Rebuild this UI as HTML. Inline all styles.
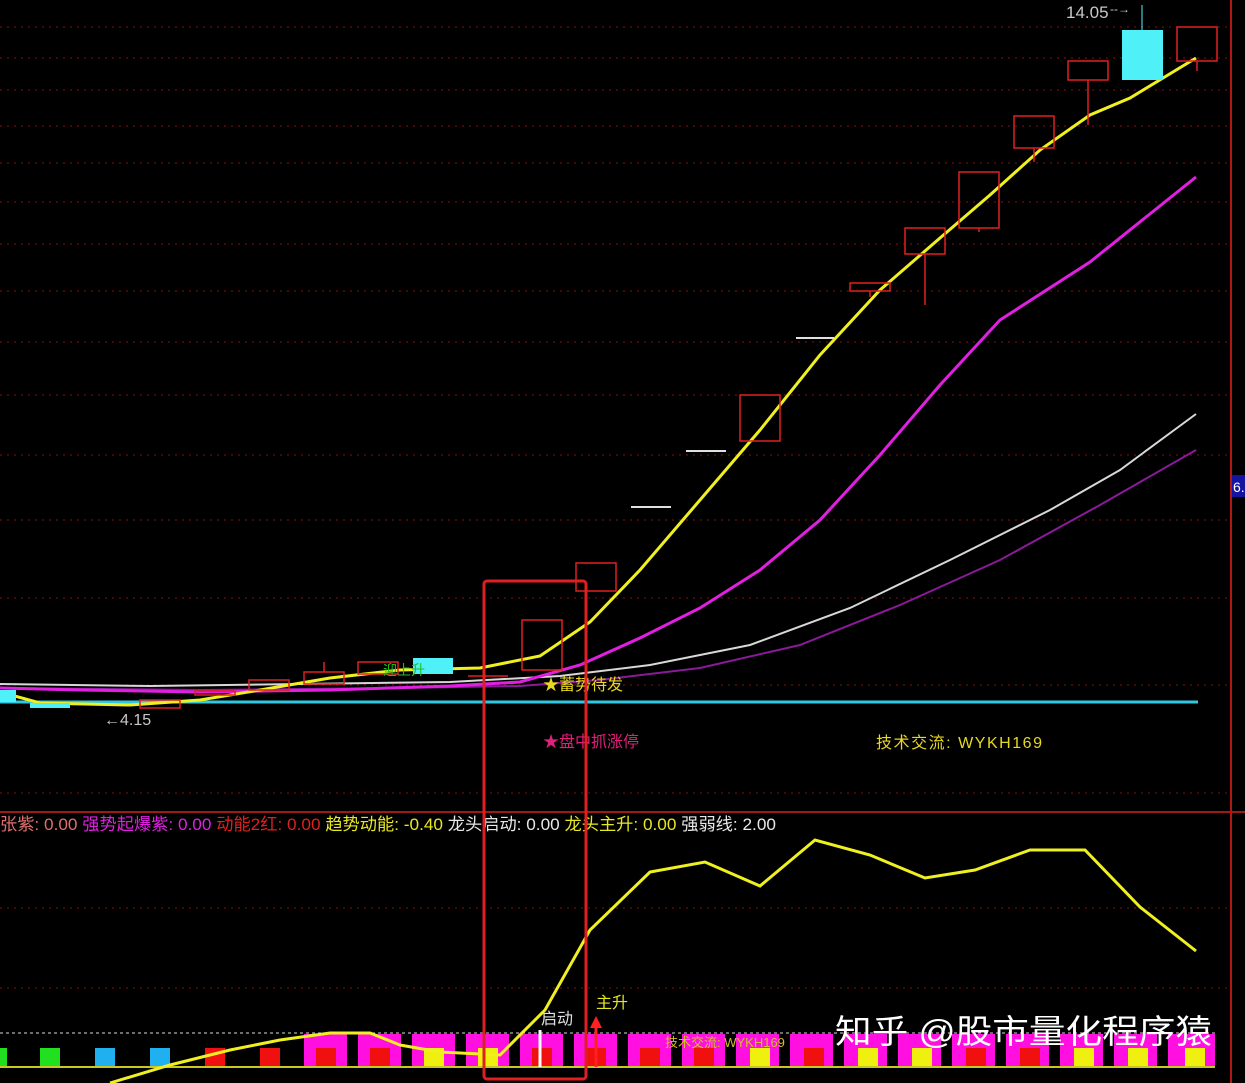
<!DOCTYPE html>
<html><head><meta charset="utf-8"><style>
html,body{margin:0;padding:0;background:#000;width:1245px;height:1083px;overflow:hidden}
svg{display:block}
text{font-family:"Liberation Sans","Noto Sans CJK SC",sans-serif}
</style></head><body>
<svg width="1245" height="1083" viewBox="0 0 1245 1083">
<g stroke="#8a1010" stroke-width="1" stroke-dasharray="2,5">
<line x1="0" y1="27" x2="1228" y2="27"/><line x1="0" y1="58" x2="1228" y2="58"/><line x1="0" y1="90" x2="1228" y2="90"/><line x1="0" y1="126" x2="1228" y2="126"/><line x1="0" y1="163" x2="1228" y2="163"/><line x1="0" y1="202" x2="1228" y2="202"/><line x1="0" y1="244" x2="1228" y2="244"/><line x1="0" y1="291" x2="1228" y2="291"/><line x1="0" y1="342" x2="1228" y2="342"/><line x1="0" y1="395" x2="1228" y2="395"/><line x1="0" y1="455" x2="1228" y2="455"/><line x1="0" y1="520" x2="1228" y2="520"/><line x1="0" y1="598" x2="1228" y2="598"/><line x1="0" y1="685" x2="1228" y2="685"/><line x1="0" y1="793" x2="1228" y2="793"/>
<line x1="0" y1="908" x2="1228" y2="908"/><line x1="0" y1="988" x2="1228" y2="988"/>
</g>
<line x1="0" y1="812" x2="1245" y2="812" stroke="#a01818" stroke-width="2"/>
<line x1="1231" y1="0" x2="1231" y2="1083" stroke="#b01818" stroke-width="2"/>
<rect x="1232" y="475" width="13" height="22" fill="#1414a0"/>
<text x="1233" y="492" fill="#fff" font-size="14">6.</text>
<line x1="0" y1="702" x2="1198" y2="702" stroke="#30c8e0" stroke-width="3"/>
<polyline fill="none" stroke="#8a1a9a" stroke-width="2" points="0,688 200,690 400,688 520,686 600,680 700,668 800,645 900,605 1000,560 1100,505 1196,450"/>
<polyline fill="none" stroke="#d8d8d8" stroke-width="2" points="0,684 150,686 300,684 450,682 560,676 650,665 750,645 850,608 950,560 1050,510 1120,470 1196,414"/>
<polyline fill="none" stroke="#e020e0" stroke-width="3" points="0,688 80,690 200,692 330,690 450,686 520,682 580,665 640,638 700,608 760,570 820,520 880,455 940,385 1000,320 1090,262 1196,177"/>
<polyline fill="none" stroke="#f0f020" stroke-width="3" points="0,692 40,703 130,705 200,700 260,690 330,678 400,670 480,668 540,656 590,622 640,570 700,500 760,430 820,355 880,290 940,238 990,195 1040,150 1090,115 1130,98 1196,58"/>
<g fill="none" stroke="#e02020" stroke-width="1.5">
<rect x="1177" y="27" width="40" height="34"/><line x1="1197" y1="61" x2="1197" y2="71"/>
<rect x="1068" y="61" width="40" height="19"/><line x1="1088" y1="80" x2="1088" y2="125"/>
<rect x="1014" y="116" width="40" height="32"/><line x1="1034" y1="148" x2="1034" y2="162"/>
<rect x="959" y="172" width="40" height="56"/><line x1="979" y1="228" x2="979" y2="232"/>
<rect x="905" y="228" width="40" height="26"/><line x1="925" y1="254" x2="925" y2="305"/>
<rect x="850" y="283" width="40" height="8"/><line x1="870" y1="291" x2="870" y2="297"/>
<rect x="740" y="395" width="40" height="46"/>
<rect x="576" y="563" width="40" height="28"/>
<rect x="522" y="620" width="40" height="50"/>
<rect x="358" y="662" width="40" height="12"/>
<rect x="304" y="672" width="40" height="12"/><line x1="324" y1="662" x2="324" y2="672"/>
<rect x="249" y="680" width="40" height="10"/>
<rect x="195" y="691" width="40" height="4"/>
<rect x="140" y="700" width="40" height="8"/>
<line x1="468" y1="676" x2="508" y2="676"/>
</g>
<g stroke="#e0e0e0" stroke-width="2"><line x1="796" y1="338" x2="834" y2="338"/><line x1="686" y1="451" x2="726" y2="451"/><line x1="631" y1="507" x2="671" y2="507"/></g>
<rect x="1122" y="30" width="41" height="50" fill="#50f0f8"/><line x1="1142" y1="5" x2="1142" y2="30" stroke="#50f0f8"/>
<rect x="413" y="658" width="40" height="16" fill="#50f0f8"/>
<rect x="0" y="690" width="16" height="12" fill="#50f0f8"/>
<rect x="30" y="703" width="40" height="5" fill="#50f0f8"/>
<text x="1066" y="18" fill="#c8c8c8" font-size="17">14.05</text><text x="1110" y="13" fill="#c8c8c8" font-size="12">--→</text>
<text x="104" y="725" fill="#c8c8c8" font-size="16">←4.15</text>
<text x="383" y="675" fill="#20c020" font-size="14">迎上升</text>
<text x="543" y="690" fill="#e8d820" font-size="16">★蓄势待发</text>
<text x="543" y="747" fill="#e0207a" font-size="16">★盘中抓涨停</text>
<text x="876" y="748" fill="#e8d820" font-size="16" textLength="166">技术交流: WYKH169</text>
<text y="830" font-size="17" textLength="776" lengthAdjust="spacingAndGlyphs"><tspan x="0" fill="#e07070">张紫: 0.00 </tspan><tspan fill="#e020e0">强势起爆紫: 0.00 </tspan><tspan fill="#e02020">动能2红: 0.00 </tspan><tspan fill="#e8e820">趋势动能: -0.40 </tspan><tspan fill="#e8e8e8">龙头启动: 0.00 </tspan><tspan fill="#e8e820">龙头主升: 0.00 </tspan><tspan fill="#e8e8e8">强弱线: 2.00</tspan></text>
<line x1="0" y1="1033" x2="1215" y2="1033" stroke="#ddd" stroke-dasharray="3,3"/>
<g fill="#ff10e0">
<rect x="304" y="1034" width="43" height="34"/><rect x="358" y="1034" width="43" height="34"/><rect x="412" y="1034" width="43" height="34"/><rect x="466" y="1034" width="43" height="34"/><rect x="520" y="1034" width="43" height="34"/><rect x="574" y="1034" width="43" height="34"/><rect x="628" y="1034" width="43" height="34"/><rect x="682" y="1034" width="43" height="34"/><rect x="736" y="1034" width="43" height="34"/><rect x="790" y="1034" width="43" height="34"/><rect x="844" y="1034" width="43" height="34"/><rect x="898" y="1034" width="43" height="34"/><rect x="952" y="1034" width="43" height="34"/><rect x="1006" y="1034" width="43" height="34"/><rect x="1060" y="1034" width="43" height="34"/><rect x="1114" y="1034" width="43" height="34"/><rect x="1168" y="1034" width="47" height="34"/>
</g>
<g>
<rect x="0" y="1048" width="7" height="19" fill="#20e020"/><rect x="40" y="1048" width="20" height="19" fill="#20e020"/><rect x="95" y="1048" width="20" height="19" fill="#20b0f0"/><rect x="150" y="1048" width="20" height="19" fill="#20b0f0"/><rect x="205" y="1048" width="20" height="19" fill="#f01010"/><rect x="260" y="1048" width="20" height="19" fill="#f01010"/>
<rect x="316" y="1048" width="20" height="19" fill="#f01010"/><rect x="370" y="1048" width="20" height="19" fill="#f01010"/><rect x="424" y="1048" width="20" height="19" fill="#f0f010"/><rect x="478" y="1048" width="20" height="19" fill="#f0f010"/><rect x="532" y="1048" width="20" height="19" fill="#f01010"/><rect x="586" y="1048" width="20" height="19" fill="#f01010"/><rect x="640" y="1048" width="20" height="19" fill="#f01010"/><rect x="694" y="1048" width="20" height="19" fill="#f01010"/><rect x="750" y="1048" width="20" height="19" fill="#f0f010"/><rect x="804" y="1048" width="20" height="19" fill="#f01010"/><rect x="858" y="1048" width="20" height="19" fill="#f0f010"/><rect x="912" y="1048" width="20" height="19" fill="#f0f010"/><rect x="966" y="1048" width="20" height="19" fill="#f01010"/><rect x="1020" y="1048" width="20" height="19" fill="#f01010"/><rect x="1074" y="1048" width="20" height="19" fill="#f0f010"/><rect x="1128" y="1048" width="20" height="19" fill="#f0f010"/><rect x="1185" y="1048" width="20" height="19" fill="#f0f010"/>
</g>
<line x1="0" y1="1067" x2="1215" y2="1067" stroke="#c8c820" stroke-width="2"/>
<line x1="540" y1="1030" x2="540" y2="1067" stroke="#fff" stroke-width="3"/>
<line x1="596" y1="1020" x2="596" y2="1067" stroke="#ff2020" stroke-width="3"/>
<polygon points="590,1028 596,1016 602,1028" fill="#ff2020"/>
<polyline fill="none" stroke="#f0f020" stroke-width="3" points="110,1083 170,1065 230,1050 280,1040 330,1033 370,1033 400,1045 440,1052 500,1055 545,1010 590,930 650,872 705,862 760,886 815,840 870,855 925,878 975,870 1030,850 1085,850 1140,907 1196,951"/>
<text x="541" y="1024" fill="#e0e0e0" font-size="16">启动</text>
<text x="596" y="1008" fill="#e8e820" font-size="16">主升</text>
<text x="665" y="1047" fill="#d0c020" font-size="13">技术交流: WYKH169</text>
<text x="835" y="1043" fill="#ffffff" font-size="33" textLength="377" lengthAdjust="spacingAndGlyphs">知乎 @股市量化程序猿</text>
<rect x="484" y="581" width="102" height="498" fill="none" stroke="#e02020" stroke-width="3" rx="3"/>
</svg>
</body></html>
